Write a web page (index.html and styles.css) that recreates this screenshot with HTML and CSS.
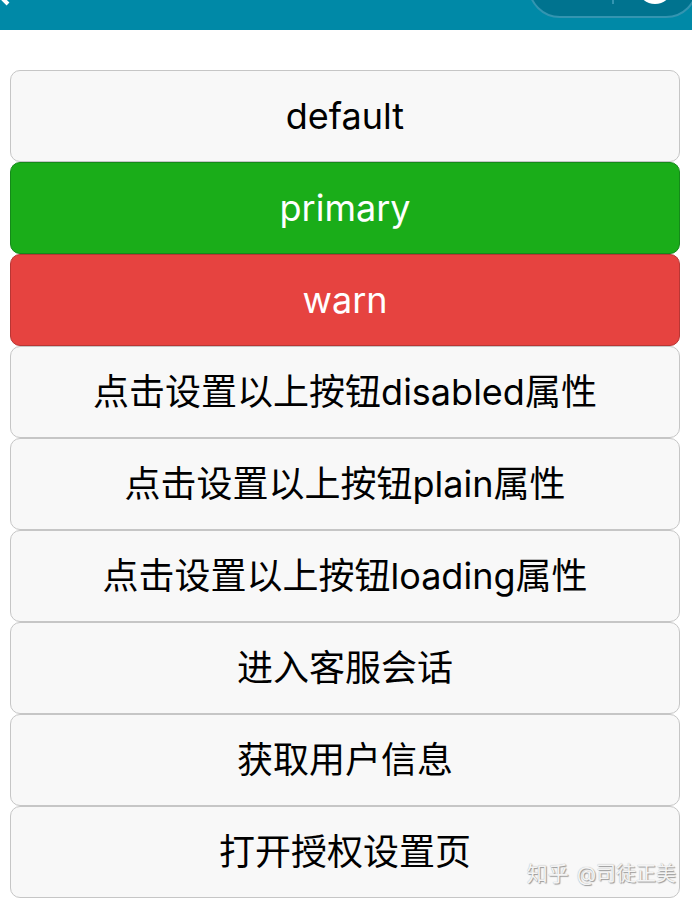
FILE: index.html
```html
<!DOCTYPE html>
<html lang="zh-CN">
<head>
<meta charset="utf-8">
<meta name="viewport" content="width=device-width, initial-scale=1">
<title>button</title>
<link rel="stylesheet" href="styles.css">
</head>
<body>
<header class="navbar">
  <a class="back" href="#" aria-label="Back"><svg width="12" height="6" viewBox="0 0 12 6"><path d="M0 -4 8 4" fill="none" stroke="#fff" stroke-width="4"/></svg></a>
  <div class="capsule">
    <button class="capsule-item" type="button" aria-label="More"></button>
    <span class="divider"></span>
    <button class="capsule-item" type="button" aria-label="Close"><svg width="36" height="36" viewBox="0 0 36 36"><circle cx="18" cy="18" r="15" fill="none" stroke="#fff" stroke-width="6"/></svg></button>
  </div>
</header>
<main class="list">
  <button class="btn" type="button">default</button>
  <button class="btn primary" type="button">primary</button>
  <button class="btn warn" type="button">warn</button>
  <button class="btn" type="button">点击设置以上按钮disabled属性</button>
  <button class="btn" type="button">点击设置以上按钮plain属性</button>
  <button class="btn" type="button">点击设置以上按钮loading属性</button>
  <button class="btn" type="button">进入客服会话</button>
  <button class="btn" type="button">获取用户信息</button>
  <button class="btn" type="button">打开授权设置页</button>
</main>
<div class="watermark"><span class="brand">知乎</span><span>@司徒正美</span></div>
</body>
</html>
```
FILE: styles.css
```css
* {
  box-sizing: border-box;
}

body {
  position: relative;
  margin: 0;
  background: #fff;
  color: #000;
  font-family: Inter, "Noto Sans CJK SC", sans-serif;
}

.navbar {
  display: flex;
  justify-content: space-between;
  align-items: flex-start;
  height: 30px;
  background: #0089a7;
  overflow: hidden;
}

.back {
  display: flex;
}

.capsule {
  display: flex;
  align-items: center;
  width: 170px;
  height: 64px;
  margin-top: -46px;
  margin-right: -6px;
  border: 2px solid #3395b1;
  border-radius: 32px;
  background: #00738f;
}

.capsule-item {
  display: flex;
  flex: 1;
  justify-content: center;
  align-items: center;
  height: 60px;
  padding: 0;
  border: 0;
  background: none;
}

.divider {
  width: 2px;
  height: 36px;
  background: #3395b1;
}

.list {
  display: flex;
  flex-direction: column;
  padding: 40px 12px 4px 10px;
}

.btn {
  height: 92px;
  padding: 0 28px;
  border: 1px solid #c6c6c6;
  border-radius: 10px;
  background: #f8f8f8;
  color: #000;
  font: inherit;
  font-size: 36px;
  line-height: 88px;
}

.primary {
  border-color: #15891a;
  background: #1aad19;
  color: #fff;
}

.warn {
  border-color: #b83634;
  background: #e64340;
  color: #fff;
}

.watermark {
  position: absolute;
  right: 16px;
  bottom: 14px;
  display: flex;
  align-items: center;
  gap: 8px;
  color: #f4f4f4;
  font-size: 20px;
  line-height: 28px;
  text-shadow: 1px 1px 1px #999, 0 0 1px #aaa;
}

.brand {
  font-size: 21px;
}
```
